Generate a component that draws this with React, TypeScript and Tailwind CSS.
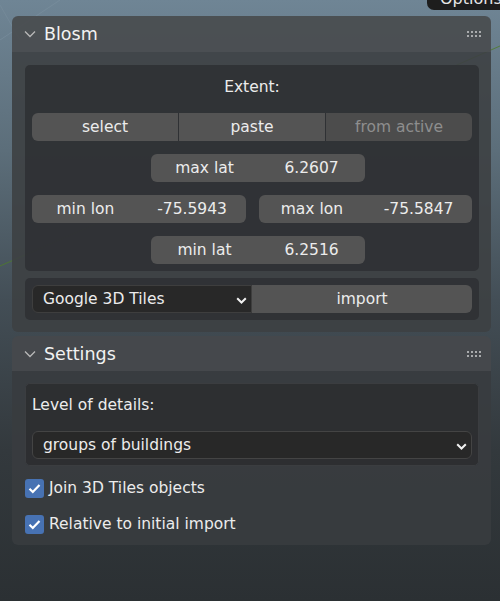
import React from "react";

const font = { fontFamily: '"DejaVu Sans", "Noto Sans", sans-serif' };

function HeaderChevron() {
  return (
    <svg width="12" height="8" viewBox="0 0 12 8" className="shrink-0">
      <polyline points="1,1.5 6,6.5 11,1.5" fill="none" stroke="#b8b8b8" strokeWidth="1.3" />
    </svg>
  );
}

function GripDots() {
  const dots = [];
  for (let r = 0; r < 2; r++) {
    for (let c = 0; c < 4; c++) {
      dots.push(<rect key={`${r}-${c}`} x={c * 4} y={r * 4} width="2" height="2" fill="#a9abad" />);
    }
  }
  return (
    <svg width="14" height="6" viewBox="0 0 14 6" className="shrink-0">
      {dots}
    </svg>
  );
}

function DropChevron() {
  return (
    <svg width="11" height="7" viewBox="0 0 11 7" className="shrink-0">
      <polyline points="1.2,1.2 5.5,5.5 9.8,1.2" fill="none" stroke="#f0f0f0" strokeWidth="2" />
    </svg>
  );
}

function Check() {
  return (
    <div className="w-[19px] h-[19px] rounded-[3px] bg-[#4772b3] flex items-center justify-center shrink-0">
      <svg width="13" height="11" viewBox="0 0 13 11">
        <polyline points="1.5,5.8 4.8,9 11.5,2" fill="none" stroke="#ffffff" strokeWidth="2.2" />
      </svg>
    </div>
  );
}

function NumField({ label, value, className }: { label: string; value: string; className?: string }) {
  return (
    <div className={"h-[28px] pt-[2px] rounded-[6px] bg-[#545454] flex items-center text-[#ececec] " + (className ?? "")}>
      <div className="flex-1 text-center">{label}</div>
      <div className="flex-1 text-center">{value}</div>
    </div>
  );
}

export default function App() {
  return (
    <div
      className="relative w-[500px] h-[601px] overflow-hidden text-[15.5px]"
      style={font}
    >
      <div className="absolute inset-0 bg-[linear-gradient(180deg,#6f8595_0%,#5c6e7a_25%,#434e56_50%,#33393d_75%,#2b3033_100%)]" />
      <svg className="absolute inset-0" width="500" height="601" viewBox="0 0 500 601">
        <line x1="0" y1="266" x2="500" y2="46" stroke="#4f7d2a" strokeWidth="1" opacity="0.8" />
        <line x1="0" y1="40" x2="60" y2="0" stroke="#7e93a2" strokeWidth="1" opacity="0.5" />
        <line x1="0" y1="5" x2="20" y2="40" stroke="#7e93a2" strokeWidth="1" opacity="0.4" />
      </svg>

      <div className="absolute top-0 right-0 w-[73px] h-[10px] bg-[#1d1d1d] rounded-bl-[7px] overflow-hidden">
        <span className="absolute left-[13px] top-[-13px] text-[16px] text-[#e6e6e6]">Options</span>
      </div>

      <div className="relative pt-[16px] flex flex-col gap-[4px]">
        {/* Blosm panel */}
        <div className="ml-[12px] w-[479px] rounded-[6px] overflow-hidden">
          <div className="h-[36px] bg-[#4a4d50]/95 flex items-center pl-[12px] pr-[10px] gap-[8px]">
            <HeaderChevron />
            <span className="text-[17.5px] text-[#f2f2f2] flex-1 pt-[1px]">Blosm</span>
            <GripDots />
          </div>
          <div className="bg-[#3d4043]/90 pl-[13px] pr-[12px] pt-[13px] pb-[12px] flex flex-col gap-[7px]">
            <div className="rounded-[5px] bg-[#2f3134]/90 p-[7px] flex flex-col gap-[13px]">
              <div className="h-[28px] pt-[3px] flex items-center justify-center text-[#ececec]">Extent:</div>
              <div className="h-[28px] flex rounded-[6px] overflow-hidden">
                <div className="flex-1 pt-[2px] bg-[#545454] flex items-center justify-center text-[#ececec]">select</div>
                <div className="w-[1px] bg-[#2f3134]" />
                <div className="flex-1 pt-[2px] bg-[#545454] flex items-center justify-center text-[#ececec]">paste</div>
                <div className="w-[1px] bg-[#2f3134]" />
                <div className="flex-1 pt-[2px] bg-[#4c4c4c] flex items-center justify-center text-[#8e8e8e]">from active</div>
              </div>
              <NumField label="max lat" value="6.2607" className="ml-[119px] w-[214px]" />
              <div className="flex gap-[13px]">
                <NumField label="min lon" value="-75.5943" className="flex-1" />
                <NumField label="max lon" value="-75.5847" className="flex-1" />
              </div>
              <NumField label="min lat" value="6.2516" className="ml-[119px] w-[214px]" />
            </div>
            <div className="rounded-[5px] bg-[#2f3134]/90 p-[7px] flex">
              <div className="h-[28px] w-[220px] pt-[2px] rounded-l-[6px] bg-[#282828] border border-[#3e3e3e] flex items-center pl-[10px] pr-[4px] text-[#ececec]">
                <span className="flex-1">Google 3D Tiles</span>
                <DropChevron />
              </div>
              <div className="h-[28px] pt-[2px] flex-1 rounded-r-[6px] bg-[#545454] flex items-center justify-center text-[#ececec]">import</div>
            </div>
          </div>
        </div>

        {/* Settings panel */}
        <div className="ml-[12px] w-[479px] rounded-[6px] overflow-hidden">
          <div className="h-[35px] bg-[#46494c]/95 flex items-center pl-[12px] pr-[10px] gap-[8px]">
            <HeaderChevron />
            <span className="text-[17.5px] text-[#f2f2f2] flex-1 pt-[1px]">Settings</span>
            <GripDots />
          </div>
          <div className="bg-[#393c3f]/90 pl-[13px] pr-[12px] pt-[12px] pb-[9px] flex flex-col">
            <div className="rounded-[5px] bg-[#2c2e30]/90 border border-[#3b3d40] p-[6px] flex flex-col gap-[13px]">
              <div className="h-[28px] pt-[3px] flex items-center text-[#ececec]">Level of details:</div>
              <div className="h-[28px] pt-[2px] rounded-[6px] bg-[#282828] border border-[#444444] flex items-center pl-[10px] pr-[4px] text-[#ececec]">
                <span className="flex-1">groups of buildings</span>
                <DropChevron />
              </div>
            </div>
            <div className="mt-[10px] flex flex-col gap-[12px]">
              <div className="h-[24px] flex items-center gap-[5px] text-[#ececec]">
                <Check />
                <span className="pt-[2px]">Join 3D Tiles objects</span>
              </div>
              <div className="h-[24px] flex items-center gap-[5px] text-[#ececec]">
                <Check />
                <span className="pt-[2px]">Relative to initial import</span>
              </div>
            </div>
          </div>
        </div>
      </div>
    </div>
  );
}
